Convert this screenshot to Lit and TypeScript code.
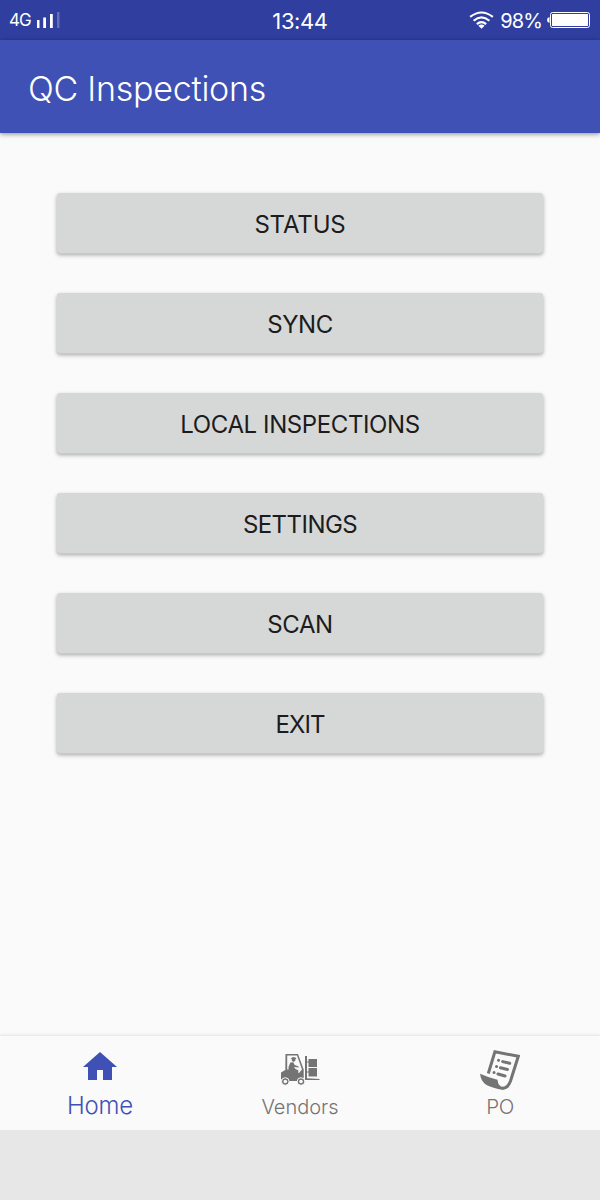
import { LitElement, html, css, svg } from "lit";
import { customElement } from "lit/decorators.js";

const home = svg`<path fill="currentColor" d="M20 2 37 17H32V30H23V20H17V30H8V17H3Z"/>`;

const forklift = svg`
  <g fill="currentColor">
    <path fill-rule="evenodd" d="M5.500 4H18L23.700 19.500V31H4.500L1 29V22.500L5.300 20ZM7.200 5.500V19.500H9L15 23H19L22 19.500 17 5.500Z"/>
    <circle cx="13.600" cy="9.800" r="1.900"/>
    <path d="M10.500 8.600 13 6.900 16 7.700 16.300 9H12Z"/>
    <path d="M10.300 12.500 13.300 12.200 14.700 15 18.700 16.500V17.600L14 17 15.500 19 18.300 20.300V23.500H8.500V17Z"/>
    <path d="M25 6H27V28.300L39.500 29V30H25Z"/>
    <path d="M28.500 9H37V17H28.500ZM28.500 18H37V26.500H28.500Z"/>
    <path d="M27 11.500H29V12.500H27ZM27 21.500H29V22.500H27Z"/>
  </g>
  <g fill="#747474" stroke="#fafafa" stroke-width="1">
    <circle cx="5.300" cy="31.500" r="3.800"/><circle cx="21" cy="31.500" r="3.800"/>
  </g>
  <g fill="#fafafa"><circle cx="5.300" cy="31.500" r="1.800"/><circle cx="21" cy="31.500" r="1.800"/></g>`;

const scroll = svg`
  <path fill="none" stroke="currentColor" stroke-width="3" stroke-linejoin="miter" d="M8.300 23.500 14.900 1.800 38.300 6.300 30.500 31Q28 38.300 22 38.300"/>
  <path fill="currentColor" d="M0 23.700Q8.500 27.500 17.500 29.800 18 36.700 23.500 37.300V39.800Q19 40 8 35.800Q1 32.500 0 23.700Z"/>
  <g stroke="currentColor" stroke-width="3" stroke-linecap="round">
    <path d="M18.500 10.300h.1M22.700 11.600 29.700 13.300M16.500 16.600h.1M20.500 17.700 27.500 19.500M14 22.600h.1M18 24 25 26"/>
  </g>`;

const tabs = [
  { name: "Home", cls: "home", icon: home },
  { name: "Vendors", cls: "vendors", icon: forklift },
  { name: "PO", cls: "po", icon: scroll },
];

const actions = [
  ["STATUS", "wide"],
  ["SYNC", "mid"],
  ["LOCAL INSPECTIONS", "mid"],
  ["SETTINGS", ""],
  ["SCAN", "mid"],
  ["EXIT", "tight"],
];

@customElement("app-root")
export class AppRoot extends LitElement {
  static styles = css`
    :host {
      display: flex;
      flex-direction: column;
      height: 1200px;
      background: #fafafa;
      font-family: Inter, Roboto, sans-serif;
      font-weight: 300;
      overflow: hidden;
    }
    * { box-sizing: border-box; }
    svg { display: block; }
    .status {
      height: 40px;
      flex: none;
      background: #303f9f;
      color: #fff;
      display: grid;
      grid-template-columns: 1fr auto 1fr;
      align-items: center;
      padding: 0 10px 0 9px;
      font-weight: 400;
    }
    .signal, .power { display: flex; align-items: center; }
    .power { justify-content: flex-end; }
    .net { font-size: 17px; letter-spacing: -1px; margin-right: 5px; }
    .clock { font-size: 22px; letter-spacing: -0.4px; padding: 1px 0 0 1px; }
    .pct { font-size: 20px; letter-spacing: -0.9px; margin: 2px 5px 0 6px; }
    .bar {
      height: 93px;
      flex: none;
      background: #3f51b5;
      color: #fff;
      display: flex;
      align-items: center;
      padding: 4px 28px 0;
      font-size: 34px;
      font-weight: 350;
      letter-spacing: -0.25px;
      box-shadow: 0 1px 5px rgba(0, 0, 0, 0.45);
    }
    .list {
      flex: 1;
      display: flex;
      flex-direction: column;
      gap: 40px;
      padding: 60px 57px 0;
    }
    .btn {
      height: 60px;
      border: 0;
      border-radius: 3px;
      background: #d6d8d7;
      color: #1c1c1c;
      font: 380 24px Inter, Roboto, sans-serif;
      letter-spacing: -0.55px;
      padding: 3px 0 0;
      box-shadow: 0 1px 0 #c6c8c7, 0 2px 4px rgba(0, 0, 0, 0.34);
    }
    .wide { letter-spacing: -0.15px; }
    .mid { letter-spacing: -0.4px; }
    .tight { letter-spacing: -0.9px; }
    .nav {
      height: 94px;
      flex: none;
      display: grid;
      grid-template-columns: repeat(3, 200px);
      background: #fafafa;
      color: #747474;
      box-shadow: 0 -1px 3px rgba(0, 0, 0, 0.1);
    }
    .tab {
      display: flex;
      flex-direction: column;
      align-items: center;
      padding-top: 14px;
      font-size: 20px;
      font-weight: 350;
      line-height: 24px;
    }
    .tab svg { margin-bottom: 5px; }
    .home { color: #3f51b5; font-size: 24px; letter-spacing: -0.2px; }
    .home svg { margin-bottom: 4px; }
    .po { font-size: 20.500px; letter-spacing: -0.4px; }
    .system { height: 70px; flex: none; background: #e7e7e7; }
  `;

  render() {
    return html`
      <div class="status">
        <div class="signal">
          <span class="net">4G</span>
          <svg width="24" height="18" viewBox="0 0 24 18" fill="#fff">
            <path d="M1 9h2.500v8H1zM7.200 6.500h2.800V17H7.200zM14 3h2.800v14H14z"/>
            <path d="M21 1h2.500v16H21z" opacity=".25"/>
          </svg>
        </div>
        <span class="clock">13:44</span>
        <div class="power">
          <svg width="25" height="20" viewBox="0 0 26 20" fill="none" stroke="#fff" stroke-width="2.200">
            <path d="M1.200 6.800Q13-2.400 24.800 6.800M4.800 10.800Q13 3.900 21.200 10.800M8.200 14.300Q13 10.200 17.800 14.300"/>
            <path d="M13 19 9.800 16Q13 13.600 16.200 16Z" fill="#fff" stroke="none"/>
          </svg>
          <span class="pct">98%</span>
          <svg width="43" height="18" viewBox="0 0 43 18">
            <path d="M2.500 6V12Q0 11.500 0 9T2.500 6Z" fill="#fff"/>
            <rect x="3.500" y="1.500" width="39" height="15" rx="2" fill="none" stroke="#fff"/>
            <rect x="5" y="3" width="36" height="12" rx=".5" fill="#fff"/>
          </svg>
        </div>
      </div>
      <div class="bar"><span class="title">QC Inspections</span></div>
      <div class="list">
        ${actions.map(([t, c]) => html`<button class="btn ${c}"><span>${t}</span></button>`)}
      </div>
      <div class="nav">
        ${tabs.map((t) => html`
          <div class="tab ${t.cls}">
            <svg width="40" height="40" viewBox="0 0 40 40">${t.icon}</svg>
            <span>${t.name}</span>
          </div>`)}
      </div>
      <div class="system"></div>
    `;
  }
}
